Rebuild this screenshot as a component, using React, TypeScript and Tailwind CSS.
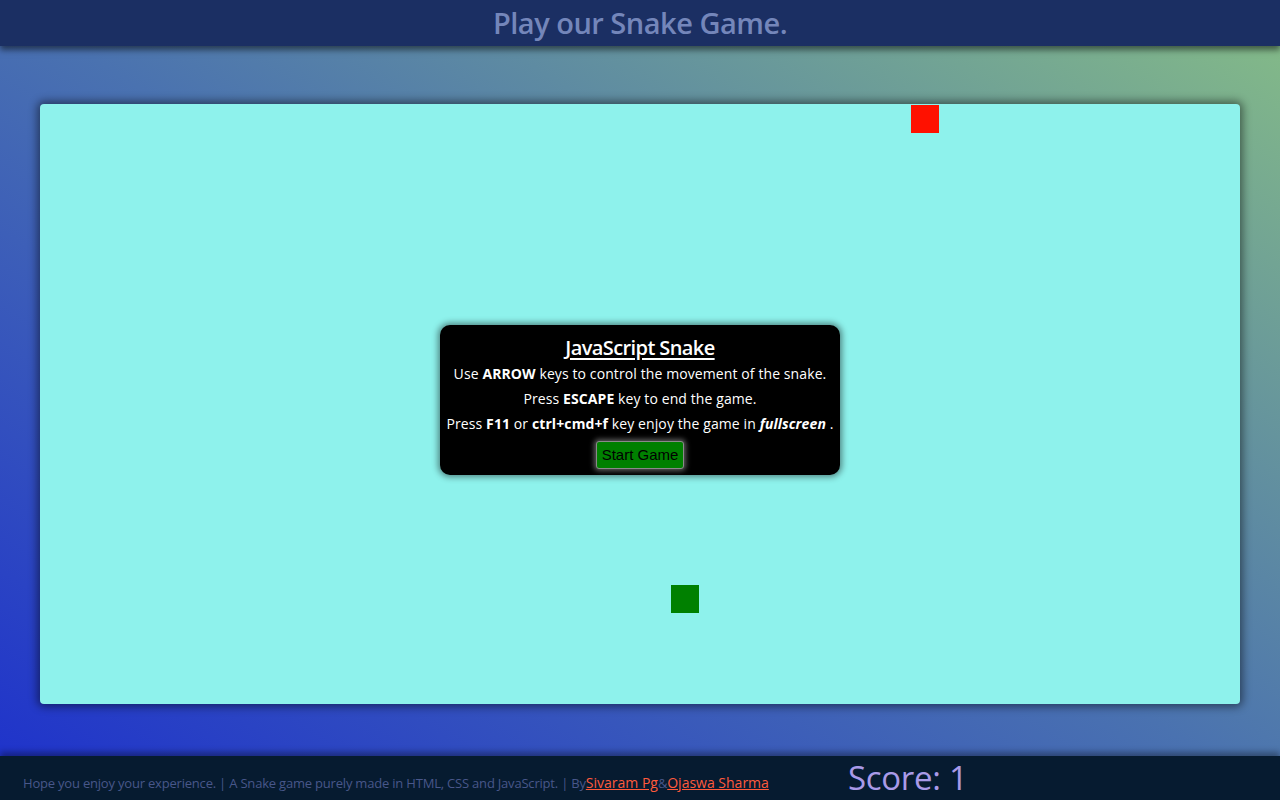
export default function App() {
  const font = { fontFamily: '"Open Sans", "Noto Sans", sans-serif' };
  return (
    <div
      className="flex flex-col h-screen w-full overflow-hidden bg-[linear-gradient(to_top_right,#1d30cc_0%,#4a72b0_50%,#86bd86_100%)]"
      style={font}
    >
      <header className="relative z-10 h-[46px] shrink-0 bg-[#1b2f63] shadow-[0_4px_6px_rgba(0,0,0,0.5)] flex items-center justify-center">
        <h1 className="text-[29px] font-semibold text-[#7486ba] tracking-[-0.5px]">
          Play our Snake Game.
        </h1>
      </header>

      <main className="flex-1 flex justify-center pt-[58px]">
        <div className="relative w-[1200px] h-[600px] bg-[#8ef2ec] rounded-[4px] shadow-[0_0_8px_3px_rgba(0,0,0,0.45)]">
          <div className="absolute left-[871px] top-[1px] w-[28px] h-[28px] bg-[#ff1100]" />
          <div className="absolute left-[631px] top-[481px] w-[28px] h-[28px] bg-[#008000]" />

          <div className="absolute left-[400px] top-[221px] w-[400px] h-[150px] bg-black rounded-[10px] shadow-[0_0_6px_2px_rgba(0,0,0,0.45)] flex flex-col items-center text-white pt-[10px] whitespace-nowrap">
            <h2 className="text-[20px] font-semibold underline underline-offset-[3px] leading-[26px] tracking-[-0.6px]">
              JavaScript Snake
            </h2>
            <p className="text-[14px] leading-[25px] tracking-[0.1px]">
              Use <b>ARROW</b> keys to control the movement of the snake.
            </p>
            <p className="text-[14px] leading-[25px] tracking-[0.1px]">
              Press <b>ESCAPE</b> key to end the game.
            </p>
            <p className="text-[14px] leading-[25px] tracking-[0.1px]">
              Press <b>F11</b> or <b>ctrl+cmd+f</b> key enjoy the game in{" "}
              <b>
                <i>fullscreen</i>
              </b>{" "}
              .
            </p>
            <button
              className="mt-[5px] w-[88px] h-[28px] bg-[#008000] text-black text-[15px] rounded-[3px] border border-[#8a8a8a] shadow-[0_0_5px_2px_rgba(200,200,200,0.45)]"
              style={{ fontFamily: '"Liberation Sans", Arial, sans-serif' }}
            >
              Start Game
            </button>
          </div>
        </div>
      </main>

      <footer className="relative h-[44px] shrink-0 bg-[#061b30] shadow-[0_-4px_6px_rgba(0,0,0,0.35)] flex items-end">
        <p className="pl-[23px] pb-[7px] text-[13px] text-[#48578a] tracking-[-0.2px] w-[848px] shrink-0 whitespace-nowrap">
          Hope you enjoy your experience. | A Snake game purely made in HTML, CSS and JavaScript. | By
          <a className="text-[#ff5a3c] underline text-[14px] tracking-[0px]">Sivaram Pg</a>&amp;
          <a className="text-[#ff5a3c] underline text-[14px] tracking-[0px]">Ojaswa Sharma</a>
        </p>
        <span className="pb-[2px] text-[33px] leading-[40px] text-[#a99ae8] tracking-[-0.3px]">Score: 1</span>
      </footer>
    </div>
  );
}
